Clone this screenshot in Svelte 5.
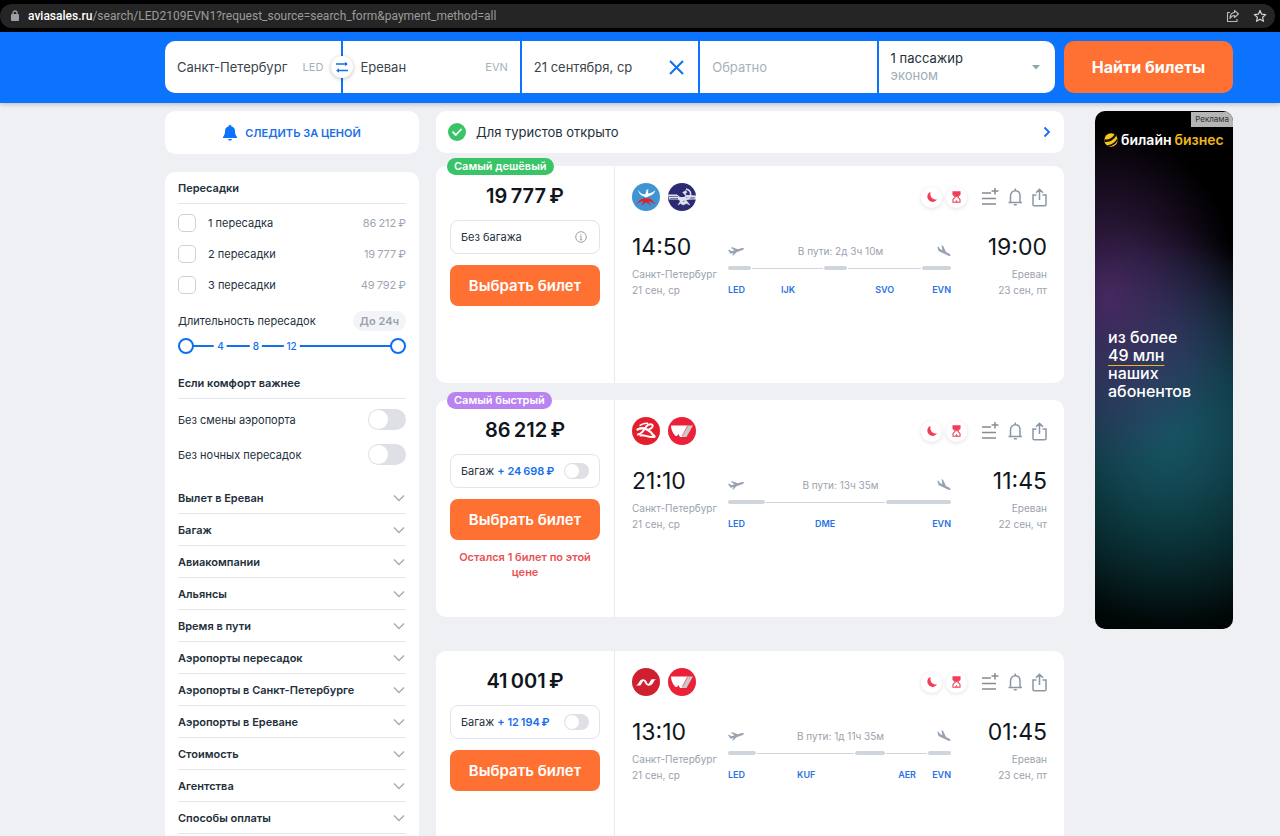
<script>
  let origin = 'Санкт-Петербург';
  let destination = 'Ереван';
  let originCode = 'LED';
  let destinationCode = 'EVN';
  let departDate = '21 сентября, ср';
  let returnDate = '';
  let minStop = 0;
  let maxStop = 24;

  // thin spaces between digit groups and before the currency sign
  const rub = (n) => String(n).replace(/(\d)(?=(\d{3})+$)/g, '$1\u2009') + '\u2009₽';

  let stops = [
    { label: '1 пересадка', price: 86212, checked: false },
    { label: '2 пересадки', price: 19777, checked: false },
    { label: '3 пересадки', price: 49792, checked: false }
  ];

  let comfort = [
    { label: 'Без смены аэропорта', on: false },
    { label: 'Без ночных пересадок', on: false }
  ];

  const sections = [
    'Вылет в Ереван',
    'Багаж',
    'Авиакомпании',
    'Альянсы',
    'Время в пути',
    'Аэропорты пересадок',
    'Аэропорты в Санкт-Петербурге',
    'Аэропорты в Ереване',
    'Стоимость',
    'Агентства',
    'Способы оплаты'
  ];

  // path: [share of the line, in flight or not]; codes: share of the line up to the next code
  let tickets = [
    {
      badge: 'Самый дешёвый',
      badgeType: 'cheap',
      price: 19777,
      baggage: null,
      logos: ['izh', 'aeroflot'],
      from: { time: '14:50', city: 'Санкт-Петербург', date: '21 сен, ср' },
      to: { time: '19:00', city: 'Ереван', date: '23 сен, пт' },
      duration: 'В пути: 2д 3ч 10м',
      path: [[23, true], [72, false], [24, true], [74, false], [29, true]],
      codes: [['LED', 53], ['IJK', 94], ['SVO', 57]]
    },
    {
      badge: 'Самый быстрый',
      badgeType: 'fast',
      price: 86212,
      baggage: 24698,
      note: 'Остался 1 билет по этой цене',
      logos: ['redwings', 'vim'],
      from: { time: '21:10', city: 'Санкт-Петербург', date: '21 сен, ср' },
      to: { time: '11:45', city: 'Ереван', date: '22 сен, чт' },
      duration: 'В пути: 13ч 35м',
      path: [[37, true], [120, false], [65, true]],
      codes: [['LED', 87], ['DME', 117]]
    },
    {
      price: 41001,
      baggage: 12194,
      spaced: true,
      logos: ['nordwind', 'vim'],
      from: { time: '13:10', city: 'Санкт-Петербург', date: '21 сен, ср' },
      to: { time: '01:45', city: 'Ереван', date: '23 сен, пт' },
      duration: 'В пути: 1д 11ч 35м',
      path: [[28, true], [99, false], [30, true], [42, false], [23, true]],
      codes: [['LED', 69], ['KUF', 101], ['AER', 34]]
    }
  ];

  const swap = () => {
    [origin, destination] = [destination, origin];
    [originCode, destinationCode] = [destinationCode, originCode];
  };
</script>

<div class="page">
  <div class="browser">
    <div class="address">
      <svg class="lock" width="9" height="12" viewBox="0 0 9 12"><rect x="1" y="4" width="8" height="7" rx="1" fill="#9aa0a6" /><path d="M3 5V3a2 2 0 0 1 4 0v2" fill="none" stroke="#9aa0a6" stroke-width="1.3" /></svg>
      <span class="url"><b>aviasales.ru</b>/search/LED2109EVN1?request_source=search_form&amp;payment_method=all</span>
      <button class="chrome-btn" aria-label="Поделиться страницей">
        <svg width="14" height="14" viewBox="0 0 14 14" fill="none" stroke="#b9bbbe" stroke-width="1.1" stroke-linejoin="round"><path d="M4 3.5H1.5v9h9.500V10" /><path d="M8.500 1.500 12.500 5 8.500 8.500V6.500C6.500 6.500 5 7.500 4 9.500 4 6 5.500 3.700 8.500 3.500z" /></svg>
      </button>
      <button class="chrome-btn" aria-label="В закладки">
        <svg width="14" height="14" viewBox="0 0 14 14" fill="none" stroke="#d0d2d4" stroke-width="1.2" stroke-linejoin="round"><path d="M7 1.400 8.600 5.200l4.100.4-3.100 2.700.9 4L7 10.200l-3.500 2.100.9-4L1.300 5.600l4.100-.4z" /></svg>
      </button>
    </div>
  </div>

  <header>
    <form class="search" on:submit|preventDefault>
      <div class="fields">
        <label class="field">
          <input type="text" aria-label="Откуда" bind:value={origin} />
          <span class="code">{originCode}</span>
        </label>
        <div class="field to">
          <button type="button" class="swap" aria-label="Поменять местами" on:click={swap}>
            <svg width="12" height="12" viewBox="0 0 12 12" fill="none" stroke="#1070f0" stroke-width="1.500"><path d="M0 3h10.500M1.500 9.500H12" /><path d="M9 .8 11.800 3 9 5.200zM3 7.300.2 9.500 3 11.700z" fill="#1070f0" stroke="none" /></svg>
          </button>
          <input type="text" aria-label="Куда" bind:value={destination} />
          <span class="code">{destinationCode}</span>
        </div>
        <div class="field">
          <input type="text" aria-label="Туда" bind:value={departDate} />
          <button type="button" class="clear" aria-label="Очистить дату" on:click={() => (departDate = '')}>
            <svg width="15" height="15" viewBox="0 0 15 15" stroke="#1070f0" stroke-width="2"><path d="M1 1l13 13M14 1 1 14" /></svg>
          </button>
        </div>
        <label class="field">
          <input type="text" aria-label="Обратно" placeholder="Обратно" bind:value={returnDate} />
        </label>
        <button type="button" class="field passengers">
          <span>1 пассажир<small>эконом</small></span>
          <svg width="8" height="5" viewBox="0 0 8 5"><path d="M0 0h8L4 4.500z" fill="#8fa3ad" /></svg>
        </button>
      </div>
      <button class="submit">Найти билеты</button>
    </form>
  </header>

  <div class="content">
    <aside>
      <button class="card track">
        <svg width="14" height="16" viewBox="0 0 14 16" fill="#0c73fe"><path d="M7 0c.8 0 1.300.5 1.300 1.200C10.600 1.800 12 3.500 12 6c0 3 .7 4.500 2 6v1H0v-1c1.300-1.500 2-3 2-6 0-2.500 1.400-4.200 3.700-4.800C5.700.5 6.200 0 7 0zM5 14h4c-.2 1-1 1.600-2 1.600S5.200 15 5 14z" /></svg>
        СЛЕДИТЬ ЗА ЦЕНОЙ
      </button>

      <div class="card filters">
        <h3>Пересадки</h3>
        <div class="stops">
          {#each stops as stop}
            <label class="stop">
              <input type="checkbox" bind:checked={stop.checked} />
              <span>{stop.label}</span>
              <span class="stop-price">{rub(stop.price)}</span>
            </label>
          {/each}
        </div>

        <div class="duration">
          <span>Длительность пересадок</span>
          <span class="pill">До 24ч</span>
        </div>
        <div class="range">
          <input type="range" min="0" max="24" aria-label="Минимум часов" bind:value={minStop} />
          <input type="range" class="upper" min="0" max="24" aria-label="Максимум часов" bind:value={maxStop} />
          {#each [4, 8, 12] as mark}
            <span class="mark" style="left: {3 + mark * 3.9}%">{mark}</span>
          {/each}
        </div>

        <h3>Если комфорт важнее</h3>
        <div class="comfort">
          {#each comfort as item}
            <label>
              {item.label}
              <input type="checkbox" class="switch" bind:checked={item.on} />
            </label>
          {/each}
        </div>

        {#each sections as section}
          <button class="section">
            {section}
            <svg width="12" height="8" viewBox="0 0 12 8" fill="none" stroke="#a3abb5" stroke-width="1.400"><path d="M1 1.500l5 5 5-5" /></svg>
          </button>
        {/each}
      </div>
    </aside>

    <main>
      <a class="card notice" href="#covid">
        <svg width="18" height="18" viewBox="0 0 18 18"><circle cx="9" cy="9" r="9" fill="#39c467" /><path d="M5 9.200 7.800 12 13 6.500" fill="none" stroke="#fff" stroke-width="1.800" stroke-linecap="round" stroke-linejoin="round" /></svg>
        <span>Для туристов открыто</span>
        <svg width="8" height="12" viewBox="0 0 8 12" fill="none" stroke="#1070f0" stroke-width="1.800"><path d="M1.500 1.500 6 6l-4.500 4.500" /></svg>
      </a>

      {#each tickets as ticket}
        <article class="card ticket" class:spaced={ticket.spaced}>
          {#if ticket.badge}
            <span class="badge {ticket.badgeType}">{ticket.badge}</span>
          {/if}
          <div class="buy">
            <div class="price">{rub(ticket.price)}</div>
            {#if ticket.baggage}
              <label class="baggage">
                <span>Багаж <b>+ {rub(ticket.baggage)}</b></span>
                <input type="checkbox" class="switch small" />
              </label>
            {:else}
              <div class="baggage">
                <span>Без багажа</span>
                <svg class="info" width="12" height="12" viewBox="0 0 12 12" fill="none" stroke="#9aa3ad"><circle cx="6" cy="6" r="5.300" /><path d="M6 5.300V9M6 3v1.200M5 5.500h1M4.800 8.800h2.400" /></svg>
              </div>
            {/if}
            <button class="choose">Выбрать билет</button>
            {#if ticket.note}
              <p class="note">{ticket.note}</p>
            {/if}
          </div>

          <div class="flight">
            <div class="top">
              {#each ticket.logos as logo}
                <svg class="logo" width="28" height="28" viewBox="0 0 28 28">
                  {#if logo === 'izh'}
                    <circle cx="14" cy="14" r="14" fill="#3e95d1" />
                    <path d="M6 6.500c1.500 3 3.500 4.500 6.500 5l1.300-1.200.7-3.300 1.800-1-.3 4.500c3.500-.5 5.500-1.500 7.500-3.500-1 3.500-3.500 5.500-7.500 6.500l-2 1-2-1C8.500 12.500 6.500 10 6 6.500z" fill="#fff" />
                    <path d="M4 21.500c2-3.200 4.500-5.500 8-6.200h4c3.700.7 6 3 7.500 6.200-2.500-2-4.700-2.800-7-3.200l3 4.500-5.300-3.500-5 3.500 2.300-4.500C9 18.500 7 19.300 4 21.500z" fill="#d9242f" />
                  {:else if logo === 'aeroflot'}
                    <circle cx="14" cy="14" r="14" fill="#2b2a72" />
                    <path d="M0 11.500h9l3 2.500h4l3-2 9 .5v4l-9 .5-3 1H12l-2-1.500H1z" fill="#dfe1ee" />
                    <path d="M1 13.500h9M2 15.500h8M18 14.700h9M18 16h8" stroke="#2b2a72" stroke-width=".6" />
                    <path d="M18 6c4.500 1 6 5 3.500 8.500-1.700 2-4.200 2-6 .8" fill="none" stroke="#dfe1ee" stroke-width="1.600" />
                    <path d="M14.500 9.500 18 7.500l1 2-1.700.8 3 5.700M10 22l3-5 2.500 2 2.500-2 4 5-3.500-1.500L15 22l-2.500-1.500z" fill="#dfe1ee" stroke="#dfe1ee" stroke-width=".5" />
                  {:else if logo === 'redwings'}
                    <circle cx="14" cy="14" r="14" fill="#e31e2d" />
                    <g fill="none" stroke="#fff" stroke-linecap="round" stroke-linejoin="round">
                      <path d="M6 17.500c3.500-.5 5-3 7-6.200C15 8 18 6.300 20 7.600c1.700 1.400.3 3.600-2.700 4.600" stroke-width="2" />
                      <path d="M5.500 12.500c3-1.500 6.500-1.500 9.500 0 3.200 1.600 5.500 4 7.500 7" stroke-width="2.400" />
                      <path d="M8.500 18.500c3.500-1.500 6.500 2.200 13.500 1.500" stroke-width="2" />
                      <path d="M8 8.300C11 6.500 13 6 15.500 6.300" stroke-width="1.400" />
                    </g>
                  {:else if logo === 'vim'}
                    <circle cx="14" cy="14" r="14" fill="#ea2138" />
                    <path d="M3 8.500h17.500L14.500 20H12l-1.500-3-1.500 2H7.500C4.300 15.500 3 12 3 8.500z" fill="#fff" />
                    <path d="M19.500 8.500H25L18.500 20H14z" fill="#c9c9cc" />
                    <path d="M19.800 8.500 14 19" stroke="#ea2138" stroke-width=".6" />
                  {:else}
                    <circle cx="14" cy="14" r="14" fill="#cf2030" />
                    <path d="M3 17.500C5.500 17.300 6 16 7.500 13.500c1.900-3 5.300-2.900 7 .1l1 1.800c.5.800 1 .7 1.500-.1l2.500-4H25c-2.300.2-2.700 1.500-4 3.700-2 3.500-6 3.500-7.700.6l-1.200-2.100c-.4-.6-.9-.6-1.200 0l-2.500 4z" fill="#fff" />
                  {/if}
                </svg>
              {/each}
              <div class="marks">
                <span class="round">
                  <svg width="12" height="12" viewBox="0 0 12 12"><path d="M4.500 1C1.200 2.300.5 6 2.500 8.800c2.300 3 6.500 2.700 8.500-.3C7.500 9.200 3.500 6.500 4.500 1z" fill="#f23d55" /></svg>
                </span>
                <span class="round">
                  <svg width="9" height="12" viewBox="0 0 9 12" fill="none" stroke="#f23d55" stroke-width="1.100"><path d="M1 .8h7v2.700L5.700 6 8 8.500v2.700H1V8.500L3.300 6 1 3.500z" /><path d="M1 1h7v2.500L4.500 6.300 1 3.500zM3 10.800 4.500 9 6 10.800z" fill="#f23d55" stroke="none" /></svg>
                </span>
              </div>
              <div class="actions">
                <button aria-label="В сравнение">
                  <svg width="17" height="18" viewBox="0 0 17 18" fill="none" stroke="#868c94" stroke-width="1.500"><path d="M0 5h9M0 10.500h14M0 16h14M9.500 3h7M13 0v6.500" /></svg>
                </button>
                <button aria-label="Подписаться">
                  <svg width="15" height="18" viewBox="0 0 15 18" fill="none" stroke="#8b97a5" stroke-width="1.500"><path d="M.5 14.500h13.500M2.500 14.500V8C2.500 4.800 4.500 2.800 7.300 2.800S12 4.800 12 8v6.500M7.300 2.800V.5M5.800 16.700h3" /></svg>
                </button>
                <button aria-label="Поделиться">
                  <svg width="15" height="19" viewBox="0 0 15 19" fill="none" stroke="#8b97a5" stroke-width="1.500"><path d="M4.500 7H1v9.500c0 .8.500 1.300 1.300 1.300h10.400c.8 0 1.300-.5 1.300-1.300V7h-3.500M7.500 12V1.500M4 4.800l3.500-3.500L11 4.800" /></svg>
                </button>
              </div>
            </div>

            <div class="route">
              <div class="point">
                <div class="time">{ticket.from.time}</div>
                <div>{ticket.from.city}</div>
                <div>{ticket.from.date}</div>
              </div>
              <div class="path">
                <div class="planes">
                  <svg width="16" height="9" viewBox="0 0 16 9" fill="#98a3b1"><path d="M0 3l1.200-.3 2.300 1.500 3-.9L2.800.8 4.500.3l5.200 2L13.300 1.200c1-.3 2.300-.3 2.500.3.2.7-.7 1.400-1.800 1.800L8.500 5.200 5.500 8.300 4.200 8.700 5.400 6.100 2.500 6.800z" /></svg>
                  <span>{ticket.duration}</span>
                  <svg width="14" height="12" viewBox="0 0 14 12" fill="#98a3b1"><path d="M.3 1.500 1.500 1.700 3 4 5.400 5.200 4.500.3 6 .8 9 7l3 1.600c1 .6 1.700 1.500 1.400 2.100s-1.500.4-2.500-.1L1.500 6z" /></svg>
                </div>
                <div class="line">
                  {#each ticket.path as [share, flying]}
                    <i class:flying style="flex-grow: {share}"></i>
                  {/each}
                </div>
                <div class="codes">
                  {#each ticket.codes as [code, share]}
                    <span style="flex-grow: {share}">{code}</span>
                  {/each}
                  <span>EVN</span>
                </div>
              </div>
              <div class="point end">
                <div class="time">{ticket.to.time}</div>
                <div>{ticket.to.city}</div>
                <div>{ticket.to.date}</div>
              </div>
            </div>
          </div>
        </article>
      {/each}
    </main>

    <a class="promo" href="#beeline">
      <span class="promo-label">Реклама</span>
      <span class="brand">
        <svg width="14" height="14" viewBox="0 0 14 14"><circle cx="7" cy="7" r="6.700" fill="#f8c51c" /><path d="M.3 6.500C5 7 9 4.500 10.500 1l1.700 1.300C10.700 6.500 6 9.500.8 9zM3 12.200c4-.2 8.500-3 10.200-7l.5 2c-1.700 3.500-5 5.800-8.700 6.300z" fill="#111" /></svg>
        билайн <em>бизнес</em>
      </span>
      <span class="slogan">из более<br /><u>49 млн</u><br />наших<br />абонентов</span>
    </a>
  </div>
</div>

<style>
  :global(body) {
    margin: 0;
    background-color: #eff0f4;
  }

  .page {
    height: 100vh;
    overflow: hidden;
    font-family: Inter, "Liberation Sans", sans-serif;
    font-size: 11px;
    color: #23303b;
  }

  button {
    padding: 0;
    border: none;
    background: none;
    font-family: inherit;
    color: inherit;
    cursor: pointer;
  }

  a {
    color: inherit;
    text-decoration: none;
  }

  svg {
    display: block;
    flex-shrink: 0;
  }

  /* browser bar */
  .browser {
    padding: 4px 5px 4px 0;
    background-color: #000;
  }

  .address {
    display: flex;
    align-items: center;
    gap: 13px;
    height: 24px;
    padding: 0 8px 0 10px;
    border-radius: 12px;
    background-color: #252525;
  }

  .url {
    flex: 1;
    margin-left: -4px;
    font-family: Roboto, "Noto Sans", sans-serif;
    font-size: 12px;
    color: #9b9b9b;
  }

  .url b {
    font-weight: 500;
    color: #fff;
  }

  /* search form */
  header {
    position: relative;
    padding: 9px 47px 10px 165px;
    background-color: #0c73fe;
    box-shadow: 0 1px 5px rgba(30, 50, 90, 0.3);
  }

  .search {
    display: grid;
    grid-template-columns: minmax(0, 1fr) 169px;
    gap: 9px;
  }

  .fields {
    display: grid;
    grid-template-columns: repeat(5, minmax(0, 1fr));
    gap: 2px;
  }

  .field {
    position: relative;
    display: flex;
    align-items: center;
    height: 52px;
    box-sizing: border-box;
    padding: 0 12px;
    background-color: #fff;
  }

  .field:first-child {
    padding-right: 18px;
    border-radius: 10px 0 0 10px;
  }

  .field.to {
    padding-left: 17px;
  }

  .field input {
    flex: 1;
    min-width: 0;
    padding: 0;
    border: none;
    outline: none;
    background: none;
    font-family: inherit;
    font-size: 13px;
    color: #3b444c;
  }

  .field input::placeholder {
    color: #a5b2bc;
    opacity: 1;
  }

  .code {
    font-size: 11px;
    color: #a5b2bc;
  }

  .swap {
    position: absolute;
    left: -12px;
    top: 15px;
    display: flex;
    align-items: center;
    justify-content: center;
    width: 22px;
    height: 22px;
    border-radius: 50%;
    background-color: #fff;
    box-shadow: 0 1px 4px rgba(0, 0, 0, 0.25);
  }

  .clear {
    margin-right: 2px;
  }

  .passengers {
    justify-content: space-between;
    padding-right: 15px;
    border-radius: 0 10px 10px 0;
    font-size: 13px;
    line-height: 17px;
    text-align: left;
  }

  .passengers small {
    display: block;
    font-size: 13px;
    color: #9dacb6;
  }

  .submit {
    border-radius: 10px;
    background-color: #ff7033;
    font-size: 16px;
    font-weight: 700;
    color: #fff;
  }

  /* columns */
  .content {
    display: grid;
    grid-template-columns: 254px 1fr 138px;
    align-items: start;
    padding: 8px 47px 0 165px;
  }

  .card {
    border-radius: 10px;
    background-color: #fff;
  }

  .track {
    display: flex;
    align-items: center;
    justify-content: center;
    gap: 8px;
    width: 100%;
    height: 43px;
    font-size: 11px;
    font-weight: 600;
    color: #1a6fe8;
  }

  /* filters */
  .filters {
    margin-top: 18px;
    padding: 0 13px 16px;
  }

  h3 {
    margin: 0;
    padding: 8px 0 7px;
    border-bottom: 1px solid #e3e6ea;
    font-size: 11px;
    line-height: 16px;
    font-weight: 600;
  }

  .stops {
    padding: 3px 0 6px;
  }

  .stop {
    display: flex;
    align-items: center;
    height: 31px;
  }

  .stop input {
    appearance: none;
    width: 18px;
    height: 18px;
    box-sizing: border-box;
    margin: 0 12px 0 0;
    border: 1px solid #cdd1d7;
    border-radius: 5px;
    background-color: #fff;
  }

  .stop input:checked {
    background-color: #0c73fe;
  }

  .stop-price {
    margin-left: auto;
    color: #a0a7b1;
  }

  .duration {
    display: flex;
    align-items: center;
    justify-content: space-between;
    height: 30px;
  }

  .pill {
    padding: 0 7px;
    border-radius: 10px;
    background-color: #f3f4f7;
    line-height: 20px;
    font-weight: 600;
    color: #9aa2ad;
  }

  .range {
    position: relative;
    height: 20px;
    margin: 0 0 11px;
  }

  .range input {
    position: absolute;
    left: 0;
    top: 0;
    appearance: none;
    width: 100%;
    height: 20px;
    margin: 0;
    background: linear-gradient(#1070f0, #1070f0) center / 100% 2px no-repeat;
  }

  .range .upper {
    background: none;
    pointer-events: none;
  }

  .range input::-webkit-slider-thumb {
    appearance: none;
    width: 16px;
    height: 16px;
    box-sizing: border-box;
    border: 2px solid #1070f0;
    border-radius: 50%;
    background-color: #fff;
    pointer-events: auto;
  }

  .mark {
    position: absolute;
    top: 2px;
    padding: 0 3px;
    transform: translateX(-50%);
    background-color: #fff;
    font-size: 10px;
    line-height: 16px;
    font-weight: 500;
    color: #1070f0;
    pointer-events: none;
  }

  .comfort {
    padding: 3px 0 10px;
  }

  .comfort label {
    display: flex;
    align-items: center;
    justify-content: space-between;
    height: 35px;
  }

  .switch {
    appearance: none;
    display: flex;
    width: 38px;
    height: 21px;
    box-sizing: border-box;
    margin: 0;
    padding: 1px;
    border-radius: 11px;
    background-color: #dfe0e5;
  }

  .switch::before {
    content: '';
    width: 19px;
    height: 19px;
    border-radius: 50%;
    background-color: #fff;
  }

  .switch.small {
    width: 25px;
    height: 16px;
  }

  .switch.small::before {
    width: 14px;
    height: 14px;
  }

  .switch:checked {
    justify-content: flex-end;
    background-color: #0c73fe;
  }

  .section {
    display: flex;
    align-items: center;
    justify-content: space-between;
    width: 100%;
    height: 32px;
    padding-right: 1px;
    border-bottom: 1px solid #e3e6ea;
    font-size: 11px;
    font-weight: 600;
  }

  /* tickets */
  main {
    margin: 0 31px 0 17px;
  }

  .notice {
    display: flex;
    align-items: center;
    gap: 10px;
    height: 42px;
    margin-bottom: 13px;
    padding: 0 13px 0 12px;
    font-size: 13px;
  }

  .notice span {
    flex: 1;
  }

  .ticket {
    position: relative;
    display: flex;
    height: 217px;
    margin-bottom: 17px;
  }

  .spaced {
    margin-top: 34px;
  }

  .badge {
    position: absolute;
    left: 11px;
    top: -8px;
    padding: 0 7px;
    border-radius: 9px;
    font-size: 11px;
    line-height: 17px;
    font-weight: 600;
    color: #fff;
  }

  .cheap {
    background-color: #39c467;
  }

  .fast {
    background-color: #b983f0;
  }

  .buy {
    width: 150px;
    padding: 18px 14px 0;
    border-right: 1px solid #e8eaee;
    text-align: center;
  }

  .price {
    font-size: 20px;
    line-height: 24px;
    font-weight: 600;
    color: #10161c;
  }

  .baggage {
    display: flex;
    align-items: center;
    justify-content: space-between;
    height: 34px;
    box-sizing: border-box;
    margin: 12px 0 11px;
    padding: 0 10px;
    border: 1px solid #e1e4e9;
    border-radius: 8px;
    font-size: 11px;
  }

  .baggage b {
    font-weight: 600;
    color: #1a6fe8;
  }

  .info {
    margin-right: 2px;
  }

  .choose {
    width: 100%;
    height: 41px;
    border-radius: 8px;
    background-color: #ff7033;
    font-size: 15px;
    font-weight: 600;
    color: #fff;
  }

  .note {
    margin: 10px 0 0;
    font-size: 11px;
    line-height: 15px;
    font-weight: 600;
    color: #ea5355;
  }

  .flight {
    flex: 1;
    padding: 17px 17px 0;
  }

  .top {
    display: flex;
    align-items: center;
    gap: 8px;
  }

  .marks {
    display: flex;
    gap: 4px;
    margin-left: auto;
  }

  .round {
    display: flex;
    align-items: center;
    justify-content: center;
    width: 21px;
    height: 21px;
    border-radius: 50%;
    background-color: #fff;
    box-shadow: 0 1px 4px rgba(0, 0, 0, 0.12);
  }

  .actions {
    display: flex;
    align-items: center;
    gap: 9px;
    margin-left: 7px;
  }

  .route {
    display: flex;
    margin-top: 22px;
    color: #9aa2ad;
  }

  .point {
    width: 96px;
    font-size: 10px;
    line-height: 16px;
    white-space: nowrap;
  }

  .end {
    text-align: right;
  }

  .time {
    margin-bottom: 5px;
    font-size: 23px;
    line-height: 28px;
    color: #10161c;
  }

  .path {
    flex: 1;
  }

  .planes {
    display: flex;
    align-items: center;
    justify-content: space-between;
    height: 16px;
    margin-top: 10px;
    font-size: 10px;
  }

  .line {
    display: flex;
    align-items: center;
    gap: 1px;
    height: 4px;
    margin-top: 7px;
  }

  .line i {
    flex-basis: 0;
    height: 1px;
    background-color: #cfd5dd;
  }

  .line .flying {
    height: 4px;
    border-radius: 2px;
  }

  .codes {
    display: flex;
    margin-top: 12px;
    font-size: 9px;
    line-height: 16px;
    font-weight: 600;
    color: #2a72e5;
  }

  .codes span {
    flex-basis: 0;
  }

  /* promo */
  .promo {
    position: relative;
    display: flex;
    flex-direction: column;
    height: 518px;
    border-radius: 10px;
    overflow: hidden;
    background:
      radial-gradient(130px 170px at 10% 36%, rgba(78, 42, 104, 0.85), transparent),
      radial-gradient(180px 190px at 55% 62%, rgba(22, 88, 102, 0.9), transparent),
      radial-gradient(130px 150px at 45% 50%, rgba(38, 46, 84, 0.9), transparent),
      radial-gradient(190px 190px at 50% 69%, rgba(8, 64, 64, 0.7), transparent),
      #000;
    color: #fff;
  }

  .promo-label {
    position: absolute;
    right: 0;
    top: 1px;
    padding: 0 4px;
    background-color: #b5b5b5;
    font-size: 8px;
    line-height: 15px;
    color: #333;
  }

  .brand {
    display: flex;
    align-items: center;
    gap: 3px;
    margin: 19px 0 0 9px;
    font-size: 14px;
    line-height: 20px;
    font-weight: 600;
    white-space: nowrap;
  }

  .brand em {
    font-style: normal;
    color: #edb51c;
  }

  .slogan {
    margin: 178px 0 0 13px;
    font-size: 16px;
    line-height: 18px;
    font-weight: 500;
  }

  .slogan u {
    text-decoration: underline 1px #edb51c;
    text-underline-offset: 4px;
  }
</style>
